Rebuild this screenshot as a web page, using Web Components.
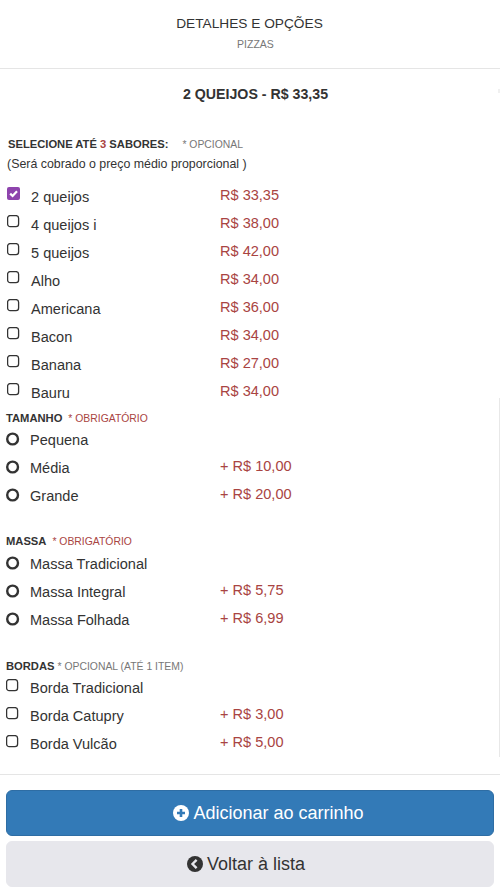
<!DOCTYPE html>
<html lang="pt-BR"><head><meta charset="utf-8"><title>Detalhes e opções</title>
<style>
html,body{margin:0;padding:0;background:#fff}
body{font-family:"Liberation Sans",Arial,sans-serif;color:#333;width:500px;height:890px;overflow:hidden}
</style></head>
<body>
<detail-page>
  <page-header slot="header" title="DETALHES E OPÇÕES" sub="PIZZAS"></page-header>
  <product-title>2 QUEIJOS - R$ 33,35</product-title>
  <option-group first>
    <group-head label="SELECIONE ATÉ <b>3</b> SABORES:" note="* OPCIONAL" gap="14" hint="(Será cobrado o preço médio proporcional )"></group-head>
    <option-row type="check" checked name="2 queijos" price="R$ 33,35"></option-row>
    <option-row type="check" name="4 queijos i" price="R$ 38,00"></option-row>
    <option-row type="check" name="5 queijos" price="R$ 42,00"></option-row>
    <option-row type="check" name="Alho" price="R$ 34,00"></option-row>
    <option-row type="check" name="Americana" price="R$ 36,00"></option-row>
    <option-row type="check" name="Bacon" price="R$ 34,00"></option-row>
    <option-row type="check" name="Banana" price="R$ 27,00"></option-row>
    <option-row type="check" name="Bauru" price="R$ 34,00"></option-row>
  </option-group>
  <option-group second>
    <group-head label="TAMANHO" note="* OBRIGATÓRIO" req gap="6"></group-head>
    <option-row type="radio" name="Pequena"></option-row>
    <option-row type="radio" name="Média" price="+ R$ 10,00"></option-row>
    <option-row type="radio" name="Grande" price="+ R$ 20,00"></option-row>
  </option-group>
  <option-group third>
    <group-head roomy label="MASSA" note="* OBRIGATÓRIO" req gap="6"></group-head>
    <option-row type="radio" name="Massa Tradicional"></option-row>
    <option-row type="radio" name="Massa Integral" price="+ R$ 5,75"></option-row>
    <option-row type="radio" name="Massa Folhada" price="+ R$ 6,99"></option-row>
  </option-group>
  <option-group fourth>
    <group-head label="BORDAS" note="* OPCIONAL (ATÉ 1 ITEM)" gap="3"></group-head>
    <option-row type="check" flush name="Borda Tradicional"></option-row>
    <option-row type="check" flush name="Borda Catupry" price="+ R$ 3,00"></option-row>
    <option-row type="check" flush name="Borda Vulcão" price="+ R$ 5,00"></option-row>
  </option-group>
  <action-button slot="footer" variant="primary" icon="plus">Adicionar ao carrinho</action-button>
  <action-button slot="footer" variant="default" icon="back">Voltar à lista</action-button>
</detail-page>
<script>
function def(name, css, html){
  customElements.define(name, class extends HTMLElement{
    connectedCallback(){
      if(this.shadowRoot) return;
      const r=this.attachShadow({mode:'open'});
      r.innerHTML='<style>'+css+'</style>'+(typeof html==='function'?html(this):html);
    }
  });
}
const a=(e,n)=>e.getAttribute(n)||'';
def('detail-page',`
  :host{display:flex;flex-direction:column;width:500px;height:890px;box-sizing:border-box}
  main{flex:1;min-height:0;position:relative;overflow:hidden}
  footer{border-top:1px solid #e5e5e5;padding:15px 6px 3px;display:flex;flex-direction:column;gap:5px}
  .track{position:absolute;right:0;top:329px;width:1px;height:359px;background:#e8e8e8}
  .nub{position:absolute;right:0;top:20px;width:2px;height:4px;background:#f0f0f0}
`,`<slot name="header"></slot><main><slot></slot><div class="nub"></div><div class="track"></div></main><footer><slot name="footer"></slot></footer>`);
def('page-header',`
  :host{display:block;height:68px;box-sizing:content-box;border-bottom:1px solid #e5e5e5;text-align:center}
  h1{margin:0;padding-top:15px;font:400 13.7px/17px "Liberation Sans",Arial,sans-serif;color:#333;padding-right:1px}
  p{margin:0;padding-top:6px;padding-left:11px;font:400 10.5px/12px "Liberation Sans",Arial,sans-serif;color:#777}
`,e=>`<h1>${a(e,'title')}</h1><p>${a(e,'sub')}</p>`);
def('product-title',`
  :host{display:block;text-align:center;font:700 14.2px/17px "Liberation Sans",Arial,sans-serif;color:#333;padding:17px 0 0 11px}
`,`<slot></slot>`);
def('option-group',`
  :host{display:block;padding:0 0 0 6px}
  :host([first]){padding-top:33px}
  :host([second]){padding-top:4px}
  :host([third]){padding-top:24px}
  :host([fourth]){padding-top:25px}
`,`<slot></slot>`);
def('group-head',`
  :host{display:block;margin-bottom:-1px}
  :host([roomy]){margin-bottom:0}
  :host([hint]){margin-bottom:10px}
  .line{display:flex;align-items:baseline;height:16px;line-height:16px}
  .label{font:700 11.2px/16px "Liberation Sans",Arial,sans-serif;color:#333}
  .label b{color:#a94442;font-weight:700}
  .note{font:400 10.4px/16px "Liberation Sans",Arial,sans-serif;color:#777}
  :host([req]) .note{color:#a94442}
  .hint{font:400 12.4px/16px "Liberation Sans",Arial,sans-serif;color:#333;margin-top:4px}
  :host([hint]) .line{padding-left:2px}
  :host([hint]) .hint{padding-left:1px}
`,e=>`<div class="line"><span class="label">${a(e,'label')}</span><span class="note" style="margin-left:${a(e,'gap')}px">${a(e,'note')}</span></div>${a(e,'hint')?`<div class="hint">${a(e,'hint')}</div>`:''}`);
def('option-row',`
  :host{display:grid;grid-template-columns:24px 190px 1fr;height:28px;align-items:center;color:#333}
  .mark{display:flex;width:14px;height:14px}
  svg{display:block}
  .name{font:400 14.56px/20px "Liberation Sans",Arial,sans-serif;margin-top:1px}
  .price{font:400 14.56px/20px "Liberation Sans",Arial,sans-serif;color:#a94442;margin-top:-3px}
  :host([type=check]) .mark{margin-left:1px;margin-top:-4px}
  :host([type=check]) .name{padding-left:1px}
  :host([flush]) .mark{margin-left:0;margin-top:-3px}
  :host([flush]) .name{padding-left:0}
`,e=>{
  const t=a(e,'type'),c=e.hasAttribute('checked');
  const ic=t==='radio'
    ?`<svg width="14" height="14" viewBox="0 0 14 14"><circle cx="6.6" cy="7" r="5.4" fill="none" stroke="#333" stroke-width="2.4"/></svg>`
    :c?`<svg width="14" height="14" viewBox="0 0 14 14"><rect x="0" y="0" width="13" height="13" rx="2" fill="#8e44ad"/><path d="M3.2 6.6 5.6 9 10 4.2" fill="none" stroke="#fff" stroke-width="2.2"/></svg>`
    :`<svg width="14" height="14" viewBox="0 0 14 14"><rect x=".6" y=".6" width="11" height="11" rx="2.6" fill="#fff" stroke="#333" stroke-width="1.3"/></svg>`;
  return `<span class="mark">${ic}</span><span class="name">${a(e,'name')}</span><span class="price">${a(e,'price')}</span>`;
});
def('action-button',`
  :host{display:flex;align-items:center;justify-content:center;gap:4px;height:46px;box-sizing:border-box;border-radius:6px;border:1px solid transparent;font:400 18px/24px "Liberation Sans",Arial,sans-serif}
  :host([variant=primary]){background:#337ab7;border-color:#2e6da4;color:#fff;padding-left:37px}
  :host([variant=default]){background:#e7e7ec;border-color:#e7e7ec;color:#333;padding-right:8px}
  svg{display:block;flex:none}
`,e=>{
  const plus=a(e,'icon')==='plus';
  const c=plus?'#fff':'#333', k=plus?'#337ab7':'#e7e7ec';
  const inner=plus?`<path d="M8 4v8M4 8h8" stroke="${k}" stroke-width="2.6"/>`:`<path d="M9.6 3.8 5.5 8l4.1 4.2" fill="none" stroke="${k}" stroke-width="2.4"/>`;
  return `<svg width="16" height="16" viewBox="0 0 16 16"><circle cx="8" cy="8" r="8" fill="${c}"/>${inner}</svg><span><slot></slot></span>`;
});
</script>
</body></html>
